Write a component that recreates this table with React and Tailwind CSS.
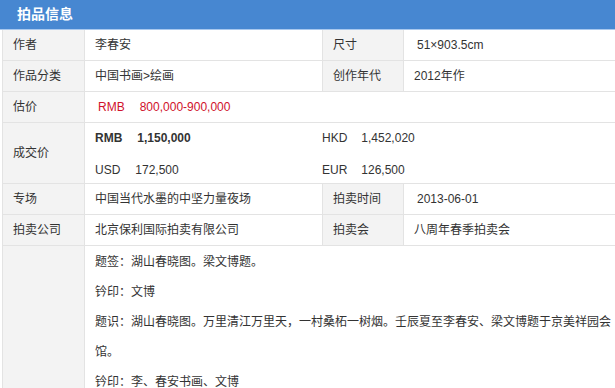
import React from "react";

const font = { fontFamily: '"Liberation Sans", "Noto Sans CJK SC", sans-serif' };

function Row({ children, h = "h-[31px]" }) {
  return <div className={`flex border-b border-[#e3e3e3] ${h}`}>{children}</div>;
}

function Label({ children, w = "w-[82px]" }) {
  return (
    <div className={`${w} shrink-0 bg-[#f3f3f3] border-r border-[#e3e3e3] flex items-center pl-[10px] text-[#333]`}>
      {children}
    </div>
  );
}

export default function App() {
  return (
    <div className="w-[615px] h-[388px] overflow-hidden bg-white text-[12px] text-[#333]" style={font}>
      <div className="h-[30px] bg-[#4787d1] border-b border-[#a9c8ee] text-white font-bold text-[14px] leading-[29px] pl-[17px]">
        拍品信息
      </div>
      <div className="pl-[2px]">
        <div className="border-l border-[#e3e3e3]">
          <Row>
            <Label>作者</Label>
            <div className="w-[238px] shrink-0 border-r border-[#e3e3e3] flex items-center pl-[10px]">李春安</div>
            <Label w="w-[81px]">尺寸</Label>
            <div className="flex-1 flex items-center pl-[13px]">51×903.5cm</div>
          </Row>
          <Row>
            <Label>作品分类</Label>
            <div className="w-[238px] shrink-0 border-r border-[#e3e3e3] flex items-center pl-[10px]">中国书画&gt;绘画</div>
            <Label w="w-[81px]">创作年代</Label>
            <div className="flex-1 flex items-center pl-[10px]">2012年作</div>
          </Row>
          <Row>
            <Label>估价</Label>
            <div className="flex-1 flex items-center pl-[13px] text-[#d0112b]">
              <span>RMB</span>
              <span className="ml-[15px]">800,000-900,000</span>
            </div>
          </Row>
          <Row h="h-[61px]">
            <Label>成交价</Label>
            <div className="flex-1 flex flex-col">
              <div className="h-[30px] flex items-center">
                <div className="w-[237px] pl-[10px] font-bold flex">
                  <span>RMB</span>
                  <span className="ml-[15px]">1,150,000</span>
                </div>
                <div className="flex">
                  <span>HKD</span>
                  <span className="ml-[14px]">1,452,020</span>
                </div>
              </div>
              <div className="h-[30px] flex items-center pt-[3px]">
                <div className="w-[237px] pl-[10px] flex">
                  <span>USD</span>
                  <span className="ml-[15px]">172,500</span>
                </div>
                <div className="flex">
                  <span>EUR</span>
                  <span className="ml-[14px]">126,500</span>
                </div>
              </div>
            </div>
          </Row>
          <Row>
            <Label>专场</Label>
            <div className="w-[238px] shrink-0 border-r border-[#e3e3e3] flex items-center pl-[10px]">中国当代水墨的中坚力量夜场</div>
            <Label w="w-[81px]">拍卖时间</Label>
            <div className="flex-1 flex items-center pl-[13px]">2013-06-01</div>
          </Row>
          <Row>
            <Label>拍卖公司</Label>
            <div className="w-[238px] shrink-0 border-r border-[#e3e3e3] flex items-center pl-[10px]">北京保利国际拍卖有限公司</div>
            <Label w="w-[81px]">拍卖会</Label>
            <div className="flex-1 flex items-center pl-[10px]">八周年春季拍卖会</div>
          </Row>
          <div className="flex h-[200px]">
            <div className="w-[82px] shrink-0 bg-[#f3f3f3] border-r border-[#e3e3e3]"></div>
            <div className="w-[530px] pl-[10px] pt-[1px] leading-[30px]">
              <p>题签：湖山春晓图。梁文博题。</p>
              <p>钤印：文博</p>
              <p>题识：湖山春晓图。万里清江万里天，一村桑柘一树烟。壬辰夏至李春安、梁文博题于京美祥园会馆。</p>
              <p>钤印：李、春安书画、文博</p>
            </div>
          </div>
        </div>
      </div>
    </div>
  );
}
